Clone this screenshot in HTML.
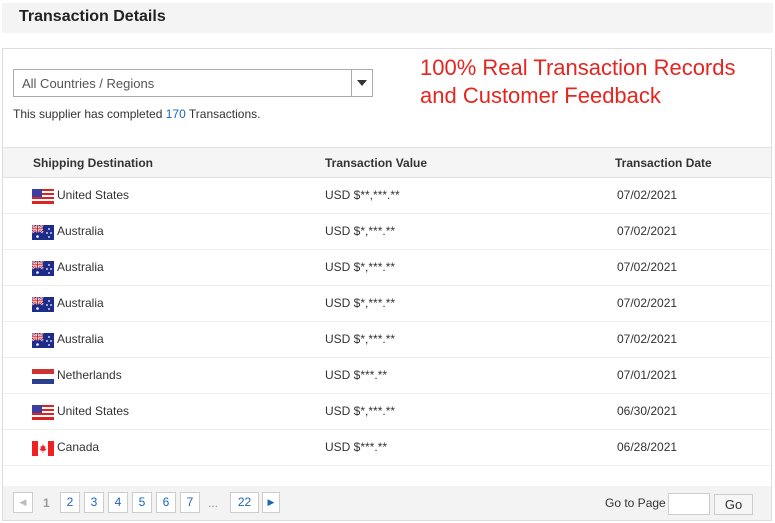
<!DOCTYPE html>
<html><head><meta charset="utf-8"><style>
*{margin:0;padding:0;box-sizing:border-box}
body{width:775px;height:523px;background:#fff;font-family:"Liberation Sans",Arial,sans-serif;font-size:12px;color:#333;position:relative;overflow:hidden}
.hd{position:absolute;left:2px;top:3px;width:771px;height:30px;background:#f4f4f4}
.hd span{position:absolute;left:17px;top:5px;font-size:16px;font-weight:bold;color:#222}
.panel{position:absolute;left:2px;top:48px;width:770px;height:473px;border:1px solid #ddd}
.abs{position:absolute}
.sel{left:13px;top:69px;width:360px;height:28px;border:1px solid #aaa;background:#fff}
.sel span{position:absolute;left:8px;top:6px;color:#555;font-size:13px}
.sel i{position:absolute;right:0;top:0;width:21px;height:26px;border-left:1px solid #aaa}
.sel i:after{content:"";position:absolute;left:5px;top:10px;border-left:5px solid transparent;border-right:5px solid transparent;border-top:6px solid #333}
.red{left:420px;top:54px;color:#e5251f;font-size:22px;line-height:28px}
.th{left:3px;top:147px;width:768px;height:31px;background:#f5f5f5;border-top:1px solid #e2e2e2;border-bottom:1px solid #e2e2e2;font-weight:bold;color:#333}
.row{left:3px;width:768px;height:36px;border-bottom:1px solid #eee}
.c{position:absolute;top:10px}
.flag{position:absolute;left:29px;top:11px;width:22px;height:15px}
.pg{left:3px;top:486px;width:768px;height:34px;background:#f3f3f3}
.b{position:absolute;top:6px;height:21px;border:1px solid #ccc;background:#fff;color:#1a66b3;text-align:center;line-height:19px;font-size:12px}
</style></head><body>
<div class="hd"><span>Transaction Details</span></div>
<div class="panel"></div>
<div class="abs sel"><span>All Countries / Regions</span><i></i></div>
<div class="abs" style="left:13px;top:107px">This supplier has completed <span style="color:#1a66b3">170</span> Transactions.</div>
<div class="abs red">100% Real Transaction Records<br>and Customer Feedback</div>
<div class="abs th"><span class="c" style="left:30px;top:8px">Shipping Destination</span><span class="c" style="left:322px;top:8px">Transaction Value</span><span class="c" style="left:612px;top:8px">Transaction Date</span></div>

<svg width="0" height="0" style="position:absolute"><defs>
<g id="us"><rect width="22" height="15" fill="#fff"/><g fill="#d22"><rect y="0" width="22" height="2"/><rect y="4" width="22" height="2"/><rect y="8" width="22" height="2"/><rect y="12" width="22" height="2"/></g><rect width="10" height="8" fill="#3a3fa0"/><rect y="14" width="22" height="1" fill="#d22"/></g>
<g id="au"><rect width="22" height="15" fill="#1d2b8a"/><path d="M0 0L11 7.5M11 0L0 7.5" stroke="#fff" stroke-width="2"/><path d="M0 0L11 7.5M11 0L0 7.5" stroke="#d22" stroke-width="0.8"/><path d="M5.5 0V7.5M0 3.75H11" stroke="#fff" stroke-width="2.2"/><path d="M5.5 0V7.5M0 3.75H11" stroke="#d22" stroke-width="1.1"/><circle cx="5.5" cy="11.5" r="1.3" fill="#fff"/><circle cx="17" cy="4" r=".9" fill="#fff"/><circle cx="15" cy="8" r=".9" fill="#fff"/><circle cx="19" cy="8" r=".9" fill="#fff"/><circle cx="17" cy="12" r=".9" fill="#fff"/></g>
<g id="nl"><rect width="22" height="5" fill="#c33"/><rect y="5" width="22" height="5" fill="#fff"/><rect y="10" width="22" height="5" fill="#2a3f8f"/></g>
<g id="ca"><rect width="22" height="15" fill="#fff"/><rect width="6" height="15" fill="#e22"/><rect x="16" width="6" height="15" fill="#e22"/><path d="M11 3L12 5.5L13.5 5L13 8L14.5 7.5L13.5 9.5L11.3 10V12H10.7V10L8.5 9.5L7.5 7.5L9 8L8.5 5L10 5.5Z" fill="#e22"/></g>
</defs></svg>

<div class="abs row" style="top:178px"><svg class="flag"><use href="#us"/></svg><span class="c" style="left:54px">United States</span><span class="c" style="left:322px">USD $**,***.**</span><span class="c" style="left:614px">07/02/2021</span></div>
<div class="abs row" style="top:214px"><svg class="flag"><use href="#au"/></svg><span class="c" style="left:54px">Australia</span><span class="c" style="left:322px">USD $*,***.**</span><span class="c" style="left:614px">07/02/2021</span></div>
<div class="abs row" style="top:250px"><svg class="flag"><use href="#au"/></svg><span class="c" style="left:54px">Australia</span><span class="c" style="left:322px">USD $*,***.**</span><span class="c" style="left:614px">07/02/2021</span></div>
<div class="abs row" style="top:286px"><svg class="flag"><use href="#au"/></svg><span class="c" style="left:54px">Australia</span><span class="c" style="left:322px">USD $*,***.**</span><span class="c" style="left:614px">07/02/2021</span></div>
<div class="abs row" style="top:322px"><svg class="flag"><use href="#au"/></svg><span class="c" style="left:54px">Australia</span><span class="c" style="left:322px">USD $*,***.**</span><span class="c" style="left:614px">07/02/2021</span></div>
<div class="abs row" style="top:358px"><svg class="flag"><use href="#nl"/></svg><span class="c" style="left:54px">Netherlands</span><span class="c" style="left:322px">USD $***.**</span><span class="c" style="left:614px">07/01/2021</span></div>
<div class="abs row" style="top:394px"><svg class="flag"><use href="#us"/></svg><span class="c" style="left:54px">United States</span><span class="c" style="left:322px">USD $*,***.**</span><span class="c" style="left:614px">06/30/2021</span></div>
<div class="abs row" style="top:430px"><svg class="flag"><use href="#ca"/></svg><span class="c" style="left:54px">Canada</span><span class="c" style="left:322px">USD $***.**</span><span class="c" style="left:614px">06/28/2021</span></div>

<div class="abs pg">
<div class="b" style="left:10px;width:20px;color:#bbb;font-size:9px">&#9664;</div>
<div style="position:absolute;left:40px;top:10px;color:#999;font-weight:bold">1</div>
<div class="b" style="left:57px;width:20px">2</div>
<div class="b" style="left:81px;width:20px">3</div>
<div class="b" style="left:105px;width:20px">4</div>
<div class="b" style="left:129px;width:20px">5</div>
<div class="b" style="left:153px;width:20px">6</div>
<div class="b" style="left:177px;width:20px">7</div>
<div style="position:absolute;left:205px;top:10px;color:#999">...</div>
<div class="b" style="left:227px;width:29px">22</div>
<div class="b" style="left:259px;width:18px;font-size:9px">&#9654;</div>
<div style="position:absolute;left:602px;top:10px;color:#333">Go to Page</div>
<div style="position:absolute;left:665px;top:7px;width:42px;height:22px;border:1px solid #ccc;background:#fff"></div>
<div style="position:absolute;left:711px;top:8px;width:39px;height:21px;border:1px solid #ccc;background:#f6f6f6;text-align:center;line-height:19px;font-size:13px;color:#333">Go</div>
</div>
</body></html>
